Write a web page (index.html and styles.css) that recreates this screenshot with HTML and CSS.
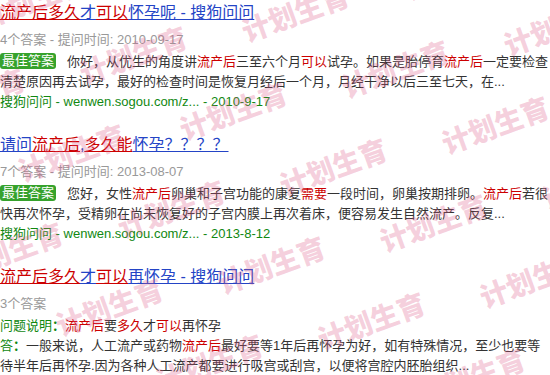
FILE: index.html
```html
<!DOCTYPE html>
<html lang="zh-CN">
<head>
<meta charset="utf-8">
<title>流产后多久才可以怀孕</title>
<link rel="stylesheet" href="styles.css">
</head>
<body>
<div class="page">
  <div class="result">
    <div class="title"><a href="#"><span class="hl">流产后多久</span><span>才</span><span class="hl">可以</span><span>怀孕呢 - 搜狗问问</span></a></div>
    <div class="meta">4个答案 - 提问时间: 2010-09-17</div>
    <div class="answer"><span class="badge">最佳答案</span>你好，从优生的角度讲<em>流产后</em>三至六个月<em>可以</em>试孕。如果是胎停育<em>流产后</em>一定要检查清楚原因再去试孕，最好的检查时间是恢复月经后一个月，月经干净以后三至七天，在...</div>
    <div class="source">搜狗问问 - wenwen.sogou.com/z... - 2010-9-17</div>
  </div>
  <div class="result">
    <div class="title"><a href="#"><span>请问</span><span class="hl">流产后</span><span>,</span><span class="hl">多久能</span><span>怀孕？？？？</span></a></div>
    <div class="meta">7个答案 - 提问时间: 2013-08-07</div>
    <div class="answer"><span class="badge">最佳答案</span>您好，女性<em>流产后</em>卵巢和子宫功能的康复<em>需要</em>一段时间，卵巢按期排卵。<em>流产后</em>若很快再次怀孕，受精卵在尚未恢复好的子宫内膜上再次着床，便容易发生自然流产。反复...</div>
    <div class="source">搜狗问问 - wenwen.sogou.com/z... - 2013-8-12</div>
  </div>
  <div class="result">
    <div class="title"><a href="#"><span class="hl">流产后多久</span><span>才</span><span class="hl">可以</span><span>再怀孕 - 搜狗问问</span></a></div>
    <div class="meta">3个答案</div>
    <div class="answer"><span class="label">问题说明<b>：</b></span><em>流产后</em>要<em>多久</em>才<em>可以</em>再怀孕</div>
    <div class="answer"><span class="label">答<b>：</b></span>一般来说，人工流产或药物<em>流产后</em>最好要等1年后再怀孕为好，如有特殊情况，至少也要等待半年后再怀孕.因为各种人工流产都要进行吸宫或刮宫，以便将宫腔内胚胎组织...</div>
  </div>
</div>
<div class="watermarks" aria-hidden="true">
  <span class="wm wm1">计划生育</span>
  <span class="wm wm2">计划生育</span>
  <span class="wm wm3">计划生育</span>
  <span class="wm wm4">计划生育</span>
  <span class="wm wm5">计划生育</span>
  <span class="wm wm6">计划生育</span>
  <span class="wm wm7">计划生育</span>
  <span class="wm wm8">计划生育</span>
  <span class="wm wm9">计划生育</span>
  <span class="wm wm10">计划生育</span>
  <span class="wm wm11">计划生育</span>
  <span class="wm wm12">计划生育</span>
  <span class="wm wm13">计划生育</span>
  <span class="wm wm14">计划生育</span>
  <span class="wm wm15">计划生育</span>
  <span class="wm wm16">计划生育</span>
  <span class="wm wm17">计划生育</span>
  <span class="wm wm18">计划生育</span>
  <span class="wm wm19">计划生育</span>
  <span class="wm wm20">计划生育</span>
  <span class="wm wm21">计划生育</span>
  <span class="wm wm22">计划生育</span>
  <span class="wm wm23">计划生育</span>
</div>
</body>
</html>
```

FILE: styles.css
```css
html, body {
  margin: 0;
  padding: 0;
  background: #fff;
}
body {
  position: relative;
  width: 550px;
  height: 375px;
  overflow: hidden;
  font-family: "Liberation Sans", Arial, "Noto Sans CJK SC", sans-serif;
  font-size: 13px;
  color: #333;
}
.page {
  width: 550px;
}
.result {
  padding-top: 1px;
  margin-bottom: 20px;
}
.title {
  font-size: 16px;
  line-height: 24px;
  white-space: nowrap;
}
.title a {
  color: #2444c6;
  text-decoration: none;
}
.title a span {
  text-decoration: underline;
}
.title a .hl {
  color: #cc0000;
}
.meta {
  margin-top: 5px;
  line-height: 20px;
  color: #999;
}
.answer {
  line-height: 20px;
  margin-top: 2px;
}
.result .answer + .answer {
  margin-top: 0;
}
.answer em {
  font-style: normal;
  color: #cc0000;
}
.badge {
  display: inline-block;
  background: #36a22c;
  color: #fff;
  line-height: 16px;
  padding: 0 2px;
  border-radius: 3px;
  margin-right: 11px;
  vertical-align: 1px;
}
.label {
  color: #118811;
}
.label b {
  font-weight: bold;
}
.source {
  line-height: 20px;
  color: #118811;
}
.watermarks {
  position: absolute;
  inset: 0;
  pointer-events: none;
  overflow: hidden;
}
.wm {
  position: absolute;
  left: 0;
  top: 0;
  font-family: "Noto Sans CJK SC", sans-serif;
  font-weight: 900;
  font-size: 28px;
  line-height: 1;
  white-space: nowrap;
  color: rgba(220, 90, 135, 0.28);
  transform: translate(-50%, -50%) rotate(-20deg);
}
.wm1 { left: 33px; top: -2px; }
.wm2 { left: 295px; top: 12px; }
.wm3 { left: 557px; top: 26px; }
.wm4 { left: -29px; top: 96px; }
.wm5 { left: 233px; top: 110px; }
.wm6 { left: 495px; top: 124px; }
.wm7 { left: 171px; top: 208px; }
.wm8 { left: 433px; top: 222px; }
.wm9 { left: 109px; top: 306px; }
.wm10 { left: 371px; top: 320px; }
.wm11 { left: 395px; top: 68px; }
.wm12 { left: 133px; top: 54px; }
.wm13 { left: 457px; top: -30px; }
.wm14 { left: 333px; top: 166px; }
.wm15 { left: 71px; top: 152px; }
.wm16 { left: 595px; top: 180px; }
.wm17 { left: 271px; top: 264px; }
.wm18 { left: 9px; top: 250px; }
.wm19 { left: 533px; top: 278px; }
.wm20 { left: 209px; top: 362px; }
.wm21 { left: -53px; top: 348px; }
.wm22 { left: 471px; top: 376px; }
.wm23 { left: 47px; top: 404px; }
```
